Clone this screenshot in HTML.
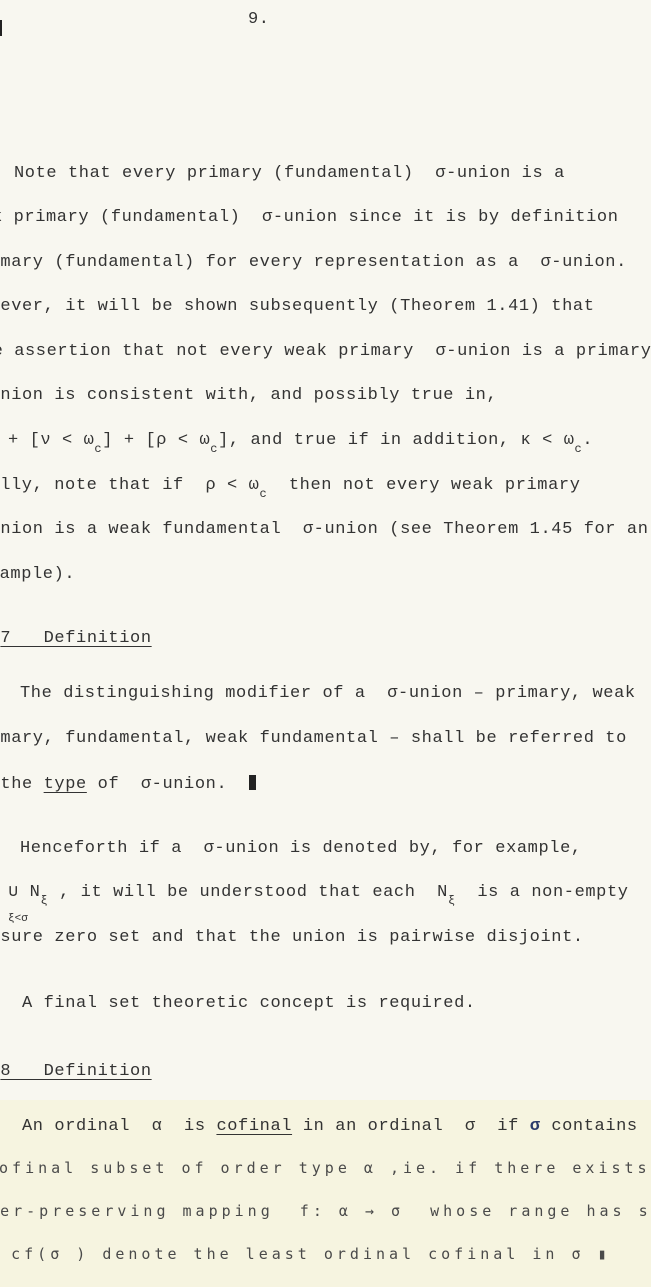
<!DOCTYPE html>
<html><head><meta charset="utf-8"><style>
html,body{margin:0;padding:0}
body{width:651px;height:1287px;overflow:hidden;position:relative;background:#f8f7f0;font-family:"Liberation Mono",monospace;color:#333}
#w{position:absolute;left:0;top:0;width:651px;height:1287px;overflow:hidden}
.bg2{position:absolute;left:0;top:1100px;width:651px;height:187px;background:#f6f4e0}
.l{position:absolute;white-space:pre;font-size:17px;line-height:16px;letter-spacing:0.6px}
.b{font-family:"DejaVu Sans Mono",monospace;font-size:15px;letter-spacing:4px;color:#4a4a4a}
u{text-decoration:underline;text-underline-offset:4px}
sub{font-size:12px;vertical-align:-8px;line-height:0}
</style></head><body><div id="w">
<div class="bg2"></div>
<div style="position:absolute;left:0;top:20px;width:2px;height:16px;background:#222"></div>
<div class="l" style="left:248px;top:12px">9.</div>
<div class="l" style="left:14px;top:166px">Note that every primary (fundamental)  σ-union is a</div>
<div class="l" style="left:-8px;top:210px">k primary (fundamental)  σ-union since it is by definition</div>
<div class="l" style="left:-32px;top:255px">primary (fundamental) for every representation as a  σ-union.</div>
<div class="l" style="left:-32px;top:299px">However, it will be shown subsequently (Theorem 1.41) that</div>
<div class="l" style="left:-29px;top:344px">the assertion that not every weak primary  σ-union is a primary</div>
<div class="l" style="left:-32px;top:388px">σ-union is consistent with, and possibly true in,</div>
<div class="l" style="left:8px;top:433px">+ [ν &lt; ω<sub>c</sub>] + [ρ &lt; ω<sub>c</sub>], and true if in addition, κ &lt; ω<sub>c</sub>.</div>
<div class="l" style="left:-43px;top:478px">Finally, note that if  ρ &lt; ω<sub>c</sub>  then not every weak primary</div>
<div class="l" style="left:-32px;top:522px">σ-union is a weak fundamental  σ-union (see Theorem 1.45 for an</div>
<div class="l" style="left:-22px;top:567px">example).</div>
<div class="l" style="left:-32px;top:631px">1.3<u>7   Definition</u></div>
<div class="l" style="left:20px;top:686px">The distinguishing modifier of a  σ-union – primary, weak</div>
<div class="l" style="left:-32px;top:731px">primary, fundamental, weak fundamental – shall be referred to</div>
<div class="l" style="left:-32px;top:775px">as the <u>type</u> of  σ-union.  <span style="display:inline-block;width:7px;height:15px;background:#222;vertical-align:-2px"></span></div>
<div class="l" style="left:20px;top:841px">Henceforth if a  σ-union is denoted by, for example,</div>
<div class="l" style="left:8px;top:885px">∪ N<sub>ξ</sub> , it will be understood that each  N<sub>ξ</sub>  is a non-empty</div>
<div class="l" style="left:8px;top:911px;font-size:11px;letter-spacing:0">ξ&lt;σ</div>
<div class="l" style="left:-32px;top:930px">measure zero set and that the union is pairwise disjoint.</div>
<div class="l" style="left:22px;top:996px">A final set theoretic concept is required.</div>
<div class="l" style="left:-32px;top:1064px">1.3<u>8   Definition</u></div>
<div class="l" style="left:22px;top:1119px">An ordinal  α  is <u>cofinal</u> in an ordinal  σ  if <b style="color:#2a3a6a">σ</b> contains</div>
<div class="l b" style="left:-14px;top:1160px">cofinal subset of order type α ,ie. if there exists</div>
<div class="l b" style="left:-39px;top:1203px">order-preserving mapping  f: α → σ  whose range has s</div>
<div class="l b" style="left:-41px;top:1246px">Let cf(σ ) denote the least ordinal cofinal in σ ▮</div>
</div></body></html>
